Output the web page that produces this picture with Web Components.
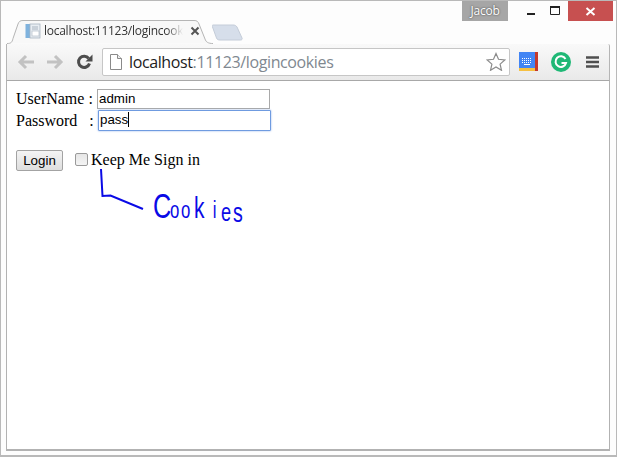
<!DOCTYPE html>
<html>
<head>
<meta charset="utf-8">
<title>logincookies</title>
<style>
  html, body { margin: 0; height: 100%; }
  body { background: #fff; overflow: hidden; }
</style>
</head>
<body>
<browser-window>
  <title-bar slot="title"></title-bar>
  <tab-strip slot="tabs" label="localhost:11123/logincook"></tab-strip>
  <nav-toolbar slot="toolbar" host-name="localhost" path=":11123/logincookies"></nav-toolbar>
  <login-form></login-form>
</browser-window>

<script>
class BrowserWindow extends HTMLElement {
  constructor() {
    super();
    this.attachShadow({ mode: 'open' });
    this.shadowRoot.innerHTML = `
      <style>
        :host {
          display: flex;
          flex-direction: column;
          box-sizing: border-box;
          width: 617px;
          height: 457px;
          padding: 1px 6px 4px 5px;
          background: #fdfdfd;
          border: 1px solid #b9b9b9;
          border-bottom-width: 2px;
        }
        .page {
          flex: 1;
          position: relative;
          background: #fff;
          border: 1px solid #b2b2b2;
          border-top: 0;
          border-bottom-width: 2px;
        }
      </style>
      <slot name="title"></slot>
      <slot name="tabs"></slot>
      <slot name="toolbar"></slot>
      <div class="page"><slot></slot></div>
    `;
  }
}

class TitleBar extends HTMLElement {
  constructor() {
    super();
    this.attachShadow({ mode: 'open' });
    this.shadowRoot.innerHTML = `
      <style>
        :host {
          display: flex;
          justify-content: flex-end;
          height: 19px;
          margin-top: -1px;
          margin-right: -3px;
        }
        .profile {
          width: 46px;
          height: 20px;
          margin-right: 10px;
          background: #a6a6a6;
          color: #fff;
          font: 12px/19px "Open Sans", sans-serif;
          letter-spacing: -0.2px;
          text-align: center;
          text-shadow: 0 0 2px #333;
        }
        .ctl { width: 25px; height: 20px; display: flex; align-items: center; justify-content: center; }
        .close { width: 45px; background: #c75050; }
        svg { display: block; }
      </style>
      <div class="profile">Jacob</div>
      <div class="ctl"><svg width="10" height="10"><rect x="1" y="7" width="8" height="2" fill="#222"/></svg></div>
      <div class="ctl"><svg width="11" height="10"><path d="M.5 1.500h9v7h-9z" fill="none" stroke="#222"/><path d="M0 1h10" stroke="#222" stroke-width="2"/></svg></div>
      <div class="ctl close"><svg width="11" height="9"><path d="M1.500 1l8 7M9.500 1l-8 7" stroke="#fff" stroke-width="2"/></svg></div>
    `;
  }
}

class TabStrip extends HTMLElement {
  constructor() {
    super();
    this.attachShadow({ mode: 'open' });
    this.shadowRoot.innerHTML = `
      <style>
        :host {
          display: flex;
          height: 24px;
          align-items: flex-end;
        }
        .tab {
          display: grid;
          width: 206px;
          height: 24px;
          margin-left: 1px;
        }
        .tab > * { grid-area: 1 / 1; }
        .shape { display: block; }
        .body {
          display: flex;
          align-items: center;
          padding-left: 18px;
          height: 22px;
        }
        .label {
          width: 139px;
          margin-left: 2px;
          overflow: hidden;
          white-space: nowrap;
          font: 12px/22px "Open Sans", sans-serif;
          letter-spacing: -0.26px;
          color: #333;
          -webkit-mask-image: linear-gradient(to right, #000 88%, transparent);
          mask-image: linear-gradient(to right, #000 88%, transparent);
        }
        .x { margin-left: 7px; display: block; }
        .new { display: block; margin: 0 0 3px -1px; }
      </style>
      <div class="tab">
        <svg class="shape" width="206" height="24">
          <path d="M0 23.500c4 0 5-1 6-5L11 4c1-2.500 2-3.500 5-3.500h171c3 0 4 1 5 3.500l6 15c1 3 3 4.500 8 4.500" fill="#f8f8f8" stroke="#b5b5b5"/>
        </svg>
        <div class="body">
          <svg width="17" height="16" viewBox="0 0 17 16">
            <rect x="0.500" y="1" width="5" height="14" fill="#7fb2dd"/>
            <rect x="5" y="1" width="10" height="14" fill="#e8edf2" stroke="#a9b4c0" stroke-width="0.800"/>
            <rect x="7" y="8" width="7" height="5" fill="#fff" stroke="#b3bdc8" stroke-width="0.700"/>
            <path d="M7 4h6M7 6h6" stroke="#a9b4c0"/>
          </svg>
          <span class="label"></span>
          <svg class="x" width="10" height="10"><path d="M1.500 1.500l7 7M8.500 1.500l-7 7" stroke="#555" stroke-width="2"/></svg>
        </div>
      </div>
      <svg class="new" width="32" height="17">
        <path d="M1 1h20c2 0 3 .6 4 2l5 11c.5 1 0 2-1.500 2H8c-2 0-3-.6-3.500-2L.5 3C0 2 0 1 1 1z" fill="#d6deea" stroke="#c4ccd8"/>
      </svg>
    `;
    this.shadowRoot.querySelector('.label').textContent = this.getAttribute('label');
  }
}

class NavToolbar extends HTMLElement {
  constructor() {
    super();
    this.attachShadow({ mode: 'open' });
    this.shadowRoot.innerHTML = `
      <style>
        :host {
          display: flex;
          align-items: center;
          box-sizing: border-box;
          height: 37px;
          padding: 0 0 1px 10px;
          background: linear-gradient(#f9f9f9, #e9e9e9);
          border: 1px solid #b5b5b5;
          border-top: 0;
          border-bottom-color: #a8a8a8;
          border-top-right-radius: 2px;
        }
        svg { display: block; flex: none; }
        .nav { display: flex; gap: 11px; align-items: center; }
        .omnibox {
          display: flex;
          align-items: center;
          box-sizing: border-box;
          width: 408px;
          height: 28px;
          margin-left: 9px;
          padding: 0 3px 0 7px;
          background: #fff;
          border: 1px solid #c6c6c6;
          border-radius: 2px;
        }
        .url {
          flex: 1;
          margin-left: 7px;
          font: 16px/26px "Open Sans", sans-serif;
          letter-spacing: -0.38px;
          color: #222;
          white-space: nowrap;
        }
        .url span { color: #808890; }
        .ext { display: flex; align-items: center; margin-left: 9px; }
      </style>
      <div class="nav">
        <svg width="18" height="16" viewBox="0 0 18 16"><path d="M9 2L3 8l6 6M3.500 8H17" fill="none" stroke="#c2c2c2" stroke-width="3"/></svg>
        <svg width="18" height="16" viewBox="0 0 18 16"><path d="M9 2l6 6-6 6M14.500 8H1" fill="none" stroke="#c2c2c2" stroke-width="3"/></svg>
        <svg width="17" height="17" viewBox="0 0 17 17" style="margin-left:1px"><path d="M13.500 10.500a5.600 5.600 0 1 1-.8-5" fill="none" stroke="#4d4d4d" stroke-width="3"/><path d="M16.500 1.500v7h-7z" fill="#4d4d4d"/></svg>
      </div>
      <div class="omnibox">
        <svg width="12" height="16" viewBox="0 0 12 16"><path d="M.5.500h7l4 4v11H.5z" fill="#fff" stroke="#8a8a8a"/><path d="M7.500.500v4h4" fill="#eee" stroke="#8a8a8a"/></svg>
        <div class="url"></div>
        <svg width="20" height="19" viewBox="0 0 20 19"><path d="M10 1.500l2.500 5.800 6.300.6-4.700 4.200 1.400 6.200L10 15l-5.500 3.300 1.400-6.200L1.200 7.900l6.300-.6z" fill="#fff" stroke="#8c8c8c" stroke-width="1.200"/></svg>
      </div>
      <div class="ext">
        <svg width="19" height="19" viewBox="0 0 19 19">
          <rect width="19" height="19" fill="#4285f4"/>
          <rect x="16" width="3" height="19" fill="#c5392b"/>
          <rect y="16" width="16" height="3" fill="#f6c042"/>
          <path d="M3 6.500h10M3 8.500h10M3 10.500h10" stroke="#fff" stroke-dasharray="1 1"/>
          <path d="M5 12.500h6" stroke="#fff"/>
        </svg>
        <svg width="20" height="20" viewBox="0 0 20 20" style="margin-left:13px">
          <circle cx="10" cy="10" r="10" fill="#1fb876"/>
          <path d="M14.500 7A5.300 5.300 0 1 0 15 11h-4.500" fill="none" stroke="#fff" stroke-width="2"/>
        </svg>
        <svg width="14" height="14" viewBox="0 0 14 14" style="margin-left:15px">
          <path d="M0 2.500h13M0 7h13M0 11.500h13" stroke="#4f4f4f" stroke-width="2.500"/>
        </svg>
      </div>
    `;
    const url = this.shadowRoot.querySelector('.url');
    url.textContent = this.getAttribute('host-name');
    const path = document.createElement('span');
    path.textContent = this.getAttribute('path');
    url.append(path);
  }
}

class LoginForm extends HTMLElement {
  constructor() {
    super();
    this.attachShadow({ mode: 'open' });
    this.shadowRoot.innerHTML = `
      <style>
        :host {
          display: block;
          padding: 8px 0 0 9px;
          font: 16px/18px "Liberation Serif", serif;
          color: #000;
        }
        .row { display: flex; align-items: center; white-space: pre; }
        .lbl { width: 81px; }
        .lbl.low { padding-top: 1px; }
        .field {
          box-sizing: border-box;
          width: 173px;
          height: 20px;
          padding: 0 1px;
          font: 13.33px/18px "Liberation Sans", sans-serif;
          background: #fff;
          border: 1px solid #a9a9a9;
          color: #000;
        }
        .focus {
          height: 21px;
          margin: 1px 0 0 1px;
          border: 1px solid #6f9be0;
          box-shadow: 0 0 2px #88aae6;
          border-radius: 1px;
        }
        .caret { display: inline-block; width: 1px; height: 15px; background: #000; vertical-align: -3px; }
        .actions { margin-top: 19px; }
        .btn {
          box-sizing: border-box;
          width: 47px;
          height: 21px;
          text-align: center;
          font: 13.33px/19px "Liberation Sans", sans-serif;
          background: linear-gradient(#f4f4f4, #dedede);
          border: 1px solid #a3a3a3;
          border-radius: 2px;
        }
        .check {
          box-sizing: border-box;
          width: 13px;
          height: 13px;
          margin: -3px 3px 0 12px;
          background: linear-gradient(#e6e6e6, #f4f4f4);
          border: 1px solid #9a9a9a;
          border-radius: 2px;
        }
        .keep { margin-top: -1px; }
        .note { position: absolute; left: 0; top: 0; pointer-events: none; }
        .note text {
          font-family: "Liberation Sans", sans-serif;
          fill: #0a0ae6;
        }
      </style>
      <div class="row"><span class="lbl">UserName :</span><div class="field">admin</div></div>
      <div class="row"><span class="lbl low">Password   :</span><div class="field focus">pass<span class="caret"></span></div></div>
      <div class="row actions"><div class="btn">Login</div><div class="check"></div><span class="keep">Keep Me Sign in</span></div>
      <svg class="note" width="300" height="150" viewBox="7 81 300 150">
        <path d="M101 169l1.500 27 8-.5L143 209" fill="none" stroke="#0a0ae6" stroke-width="2"/>
        <text transform="scale(.7 1)" font-size="36"><tspan x="218.600" y="218">C</tspan><tspan x="243" y="218" font-size="24">o</tspan><tspan x="258.600" y="218" font-size="24">o</tspan><tspan x="277" y="218" font-size="30">k</tspan><tspan x="304" y="218" font-size="24">i</tspan><tspan x="315.700" y="221" font-size="26">e</tspan><tspan x="332.900" y="222" font-size="28">s</tspan></text>
      </svg>
    `;
  }
}

customElements.define('browser-window', BrowserWindow);
customElements.define('title-bar', TitleBar);
customElements.define('tab-strip', TabStrip);
customElements.define('nav-toolbar', NavToolbar);
customElements.define('login-form', LoginForm);
</script>
</body>
</html>
